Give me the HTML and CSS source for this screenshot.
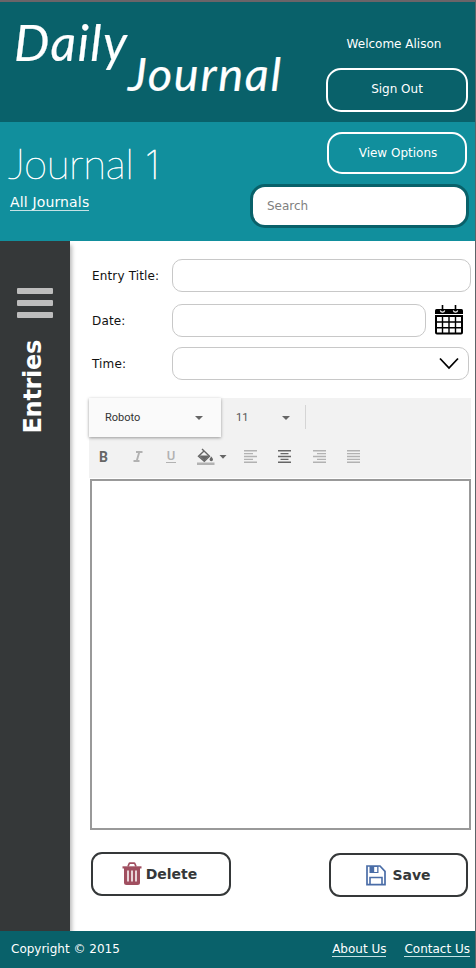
FILE: index.html
```html
<!DOCTYPE html>
<html lang="en">
<head>
<meta charset="utf-8">
<title>Daily Journal</title>
<link rel="stylesheet" href="styles.css">
</head>
<body>
<div class="page">
  <header class="header">
    <svg class="logo" width="300" height="120" viewBox="0 2 300 120" role="img" aria-label="Daily Journal">
      <text x="14" y="61" font-size="50" textLength="113">Daily</text>
      <text x="128" y="91" font-size="47" textLength="153">Journal</text>
    </svg>
    <div class="account">
      <span class="welcome">Welcome Alison</span>
      <button class="btn sign-out">Sign Out</button>
    </div>
  </header>
  <section class="band">
    <div class="heading">
      <svg class="title" width="170" height="68" viewBox="0 122 170 68">
        <text x="8" y="178.500" font-size="42" textLength="126">Journal</text>
        <text class="num" x="145" y="178.500" font-size="40">1</text>
      </svg>
      <a class="link all" href="#">All Journals</a>
    </div>
    <div class="tools">
      <button class="btn view">View Options</button>
      <input class="search" type="text" placeholder="Search">
    </div>
  </section>
  <div class="body">
    <aside class="side">
      <div class="burger"><i></i><i></i><i></i></div>
      <span class="entries">Entries</span>
    </aside>
    <main class="main">
      <div class="row r1"><label>Entry Title:</label><div class="field f1"></div></div>
      <div class="row r2"><label>Date:</label><div class="field f2"></div>
        <svg class="cal" width="30" height="31" viewBox="0 0 30 31">
          <path d="M1 9V5.500Q1 4 2.500 4H27.500Q29 4 29 5.500V9Z"/>
          <path d="M8.500 0V6M21.500 0V6" stroke="#000" stroke-width="1.600"/>
          <path d="M6.300 5.500a2.300 2.300 0 0 0 4.400 0M19.300 5.500a2.300 2.300 0 0 0 4.400 0" fill="none" stroke="#fff" stroke-width="1.200"/>
          <path d="M2 11H28V27.500Q28 28.500 27 28.500H3Q2 28.500 2 27.500Z" fill="none" stroke="#000" stroke-width="2"/>
          <path d="M8.500 11V28M15 11V28M21.500 11V28M2 17H28M2 22.700H28" stroke="#000" stroke-width="1.400"/>
        </svg>
      </div>
      <div class="row r3"><label>Time:</label><div class="field f3">
        <svg width="20" height="13" viewBox="0 0 20 13"><path d="M1 1.500L10 11L19 1.500" fill="none" stroke="#000" stroke-width="1.800"/></svg>
      </div></div>
      <div class="toolbar">
        <div class="fonts">
          <div class="font-select"><span>Roboto</span><i class="caret"></i></div>
          <div class="size-select"><span>11</span><i class="caret"></i></div>
        </div>
        <div class="formats">
          <b class="bold">B</b>
          <svg class="italic" width="10" height="12" viewBox="0 0 10 12"><path d="M3 1H9.500M.5 10H6.500M6.300 1L3.700 10" fill="none" stroke="#b2b2b2" stroke-width="1.900"/></svg>
          <span class="under">U</span>
          <svg class="fill" width="30" height="18" viewBox="0 0 30 18">
            <path d="M5 1L12.500 8.200L7.300 13.200L1.500 8.200L7.300 2.800" fill="none" stroke="#666" stroke-width="1.400"/>
            <path d="M2 7.500H12.500L7.300 12.800Z" fill="#666"/>
            <path d="M14.300 8.500Q16 10.500 16 11.500A1.700 1.700 0 0 1 12.600 11.500Q12.600 10.500 14.300 8.500Z" fill="#666"/>
            <path d="M0 14.500H17.500V17H0Z" fill="#b2b2b2"/>
            <path d="M22.500 7H29.500L26 10.700Z" fill="#666"/>
          </svg>
          <svg class="al a1" width="13" height="13" viewBox="0 0 13 13"><path d="M0 .7H13M0 3.600H9M0 6.500H13M0 9.400H9M0 12.300H13"/></svg>
          <svg class="al a2" width="13" height="13" viewBox="0 0 13 13"><path d="M0 .7H13M2.500 3.600H10.500M0 6.500H13M2.500 9.400H10.500M0 12.300H13"/></svg>
          <svg class="al a3" width="13" height="13" viewBox="0 0 13 13"><path d="M0 .7H13M4 3.600H13M0 6.500H13M4 9.400H13M0 12.300H13"/></svg>
          <svg class="al a4" width="13" height="13" viewBox="0 0 13 13"><path d="M0 .7H13M0 3.600H13M0 6.500H13M0 9.400H13M0 12.300H13"/></svg>
        </div>
      </div>
      <div class="editor"></div>
      <div class="actions">
        <button class="act delete">
          <svg width="20" height="24" viewBox="0 0 20 24">
            <path d="M6 4.500L7 2Q7.300 1.200 8 1.200H12Q12.700 1.200 13 2L14 4.500" fill="none" stroke="#a04f60" stroke-width="1.700"/>
            <path d="M.5 4.300H19.500V6.500H.5Z" fill="#a04f60"/>
            <path d="M2 6H18V20.500Q18 23 15.500 23H4.500Q2 23 2 20.500Z" fill="#a04f60"/>
            <path d="M6 8.500V19.500M10 8.500V19.500M14 8.500V19.500" stroke="#fff" stroke-width="1.500"/>
          </svg><span>Delete</span>
        </button>
        <button class="act save">
          <svg width="20" height="21" viewBox="0 0 20 21">
            <path d="M1 1H14L19 6.300V19.700H1Z" fill="none" stroke="#4a6da7" stroke-width="1.700"/>
            <path d="M3.500 1H12.500V8H3.500Z" fill="#4a6da7"/>
            <path d="M8.200 2H11.200V7H8.200Z" fill="#fff"/>
            <path d="M4 19.500V12.500H16V19.500" fill="none" stroke="#4a6da7" stroke-width="1.600"/>
          </svg><span>Save</span>
        </button>
      </div>
    </main>
  </div>
  <footer class="footer">
    <span class="copy">Copyright © 2015</span>
    <a class="link about" href="#">About Us</a>
    <a class="link contact" href="#">Contact Us</a>
  </footer>
</div>
</body>
</html>
```
FILE: styles.css
```css
* { box-sizing: border-box; }
body { margin: 0; font: 12px/16px "DejaVu Sans", sans-serif; color: #111; }
button, input { font: inherit; margin: 0; }
.page { width: 476px; height: 968px; display: flex; flex-direction: column; border-top: 2px solid #6b6468; border-right: 1px solid #5c6468; background: #fff; overflow: hidden; }
.header { height: 120px; flex: none; background: #09616a; display: flex; justify-content: space-between; }
.logo text { font-family: Lato, sans-serif; font-style: italic; font-weight: 400; fill: #fff; stroke: #fff; stroke-width: .2; stroke-linejoin: round; }
.account { display: flex; flex-direction: column; align-items: center; padding: 34px 7px 0 0; color: #fff; }
.welcome { margin-right: 6px; }
.btn { border: 2px solid #fff; border-radius: 15px; background: none; color: #fff; padding: 0 0 3px; }
.sign-out { width: 142px; height: 44px; margin-top: 16px; }
.band { height: 119px; flex: none; background: #118f9d; display: flex; justify-content: space-between; }
.heading { display: flex; flex-direction: column; align-items: flex-start; }
.title { display: block; }
.title text { font-family: Lato, sans-serif; font-weight: 100; fill: #fff; stroke: #fff; stroke-width: .6; }
.title .num { font-family: Inter, sans-serif; }
.link { color: #fff; text-decoration: none; border-bottom: 1px solid #c5e2e5; line-height: 15px; }
.all { margin: 4px 0 0 10px; font-size: 14px; line-height: 16px; letter-spacing: .15px; }
.tools { display: flex; flex-direction: column; align-items: flex-end; padding: 10px 6px 0 0; }
.view { width: 140px; height: 42px; margin-right: 2px; padding-bottom: 1px; padding-left: 2px; }
.search { width: 219px; height: 44px; margin-top: 10px; border: 3px solid #09616a; border-radius: 15px; padding: 0 14px 1px; background: #fff; outline: 0; }
.search::placeholder { color: #808080; opacity: 1; }
.body { height: 690px; flex: none; display: flex; }
.side { width: 70px; background: #353839; box-shadow: 2px 4px 4px #bbb; display: flex; flex-direction: column; align-items: center; padding-top: 47px; }
.burger { display: grid; gap: 6px; }
.burger i { width: 36px; height: 6px; border-radius: 1px; background: #bdbdbd; }
.entries { writing-mode: vertical-rl; transform: rotate(180deg); color: #fff; font: bold 24px/30px "DejaVu Sans", sans-serif; margin: 22px 5px 0 0; letter-spacing: -.3px; }
.main { width: 405px; padding-left: 19px; padding-top: 18px; }
.row { display: flex; align-items: center; }
.row label { width: 83px; padding-left: 3px; flex: none; letter-spacing: .15px; }
.field { height: 33px; border: 1px solid #c8c8c8; border-radius: 10px; }
.f1 { width: 299px; }
.r2 { margin-top: 12px; height: 33px; }
.f2 { width: 254px; }
.cal { margin-left: 8px; }
.r3 { margin-top: 10px; }
.f3 { width: 297px; display: flex; align-items: center; justify-content: flex-end; padding-right: 9px; }
.toolbar { margin-top: 18px; width: 382px; height: 80px; background: #f2f2f2; font-family: Roboto, sans-serif; color: #333; font-size: 11px; }
.fonts { display: flex; height: 39px; }
.font-select { width: 132px; background: #fafafa; box-shadow: 0 1px 3px #999; display: flex; align-items: center; justify-content: space-between; padding: 0 18px 0 16px; }
.size-select { width: 85px; height: 24px; margin-top: 7px; border-right: 1px solid #d5d5d5; display: flex; align-items: center; justify-content: space-between; padding: 1px 15px 0 15px; color: #555; }
.caret { border: 4px solid transparent; border-top: 4px solid #666; border-bottom: 0; }
.formats { height: 39px; display: flex; align-items: center; padding-left: 10px; }
.bold { font-size: 14px; color: #666; width: 34px; }
.italic { width: 10px; margin-right: 23px; }
.under { font-size: 13px; line-height: 12px; color: #b2b2b2; width: 10px; text-align: center; border-bottom: 1.500px solid #b2b2b2; margin-right: 21px; font-weight: 500; }
.fill { margin-right: 17px; }
.al { stroke: #b2b2b2; stroke-width: 1.400; margin-right: 21.400px; }
.a2 { stroke: #666; }
.editor { width: 381px; height: 351px; margin: 1px 0 0 1px; border: 2px solid #999; }
.actions { display: flex; justify-content: space-between; padding: 22px 7px 0 2px; }
.act { height: 44px; border: 2px solid #353839; border-radius: 11px; background: #fff; color: #353839; font-weight: bold; font-size: 14px; display: flex; align-items: center; justify-content: center; gap: 5px; padding: 0; }
.delete { width: 140px; padding-right: 3px; gap: 4px; }
.save { width: 139px; margin-top: 1px; gap: 6px; }
.footer { height: 37px; flex: none; background: #09616a; color: #fff; display: flex; align-items: flex-start; padding: 10px 5px 0 11px; }
.about { margin-left: auto; }
.link.about, .link.contact { padding-top: 1px; line-height: 14px; }
.contact { margin-left: 18px; }
```
